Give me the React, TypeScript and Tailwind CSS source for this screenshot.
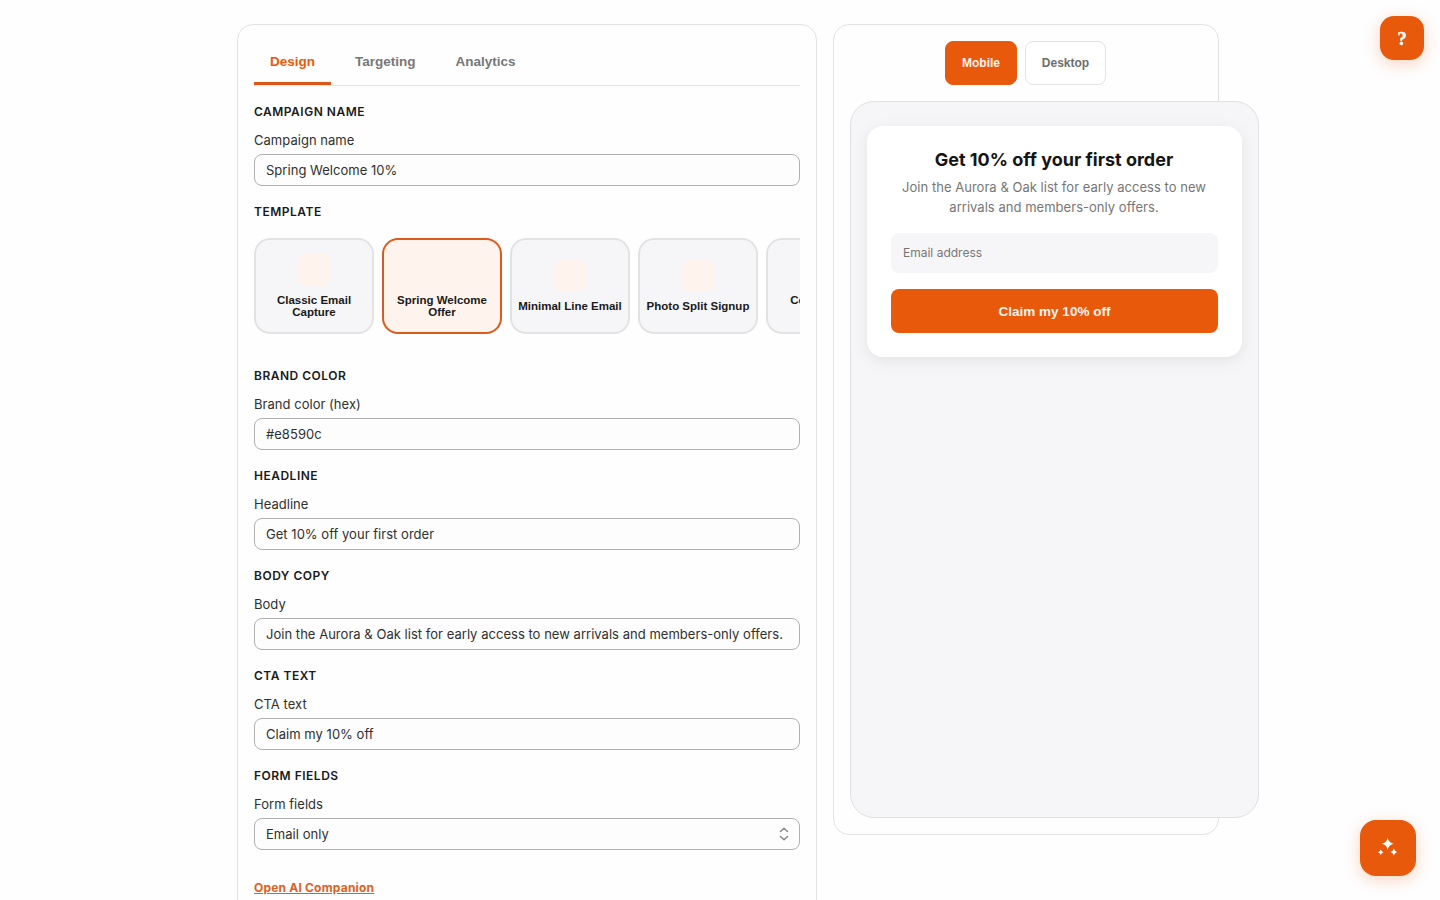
import { useState } from "react";

const tabs = ["Design", "Targeting", "Analytics"];

const templates = [
  "Classic Email Capture",
  "Spring Welcome Offer",
  "Minimal Line Email",
  "Photo Split Signup",
  "Corner Email Signup",
];

function Section({ title, children }: { title: string; children: React.ReactNode }) {
  return (
    <section className="flex flex-col gap-2">
      <h2 className="text-[12px] leading-5 font-semibold tracking-[0.5px] uppercase text-[#1a1a1a]">{title}</h2>
      {children}
    </section>
  );
}

function Field({ label, value, onChange }: { label: string; value: string; onChange: (v: string) => void }) {
  return (
    <label className="flex flex-col gap-1">
      <span className="text-[13px] leading-5 tracking-[0.03px] text-[#303030]">{label}</span>
      <input
        value={value}
        onChange={(e) => onChange(e.target.value)}
        className="h-8 w-full rounded-lg border border-[#b0b0b0] bg-[#fdfdfd] px-[11px] text-[13px] tracking-[0.03px] text-[#303030] outline-none"
      />
    </label>
  );
}

export default function App() {
  const [tab, setTab] = useState("Design");
  const [template, setTemplate] = useState("Spring Welcome Offer");
  const [device, setDevice] = useState("Mobile");
  const [name, setName] = useState("Spring Welcome 10%");
  const [color, setColor] = useState("#e8590c");
  const [headline, setHeadline] = useState("Get 10% off your first order");
  const [body, setBody] = useState("Join the Aurora & Oak list for early access to new arrivals and members-only offers.");
  const [cta, setCta] = useState("Claim my 10% off");

  return (
    <div className="h-screen overflow-hidden bg-[#fefefe] font-['Inter',sans-serif] text-[#303030]">
      <div className="flex items-start gap-4 pt-6 pl-[237px]">
        <div className="flex h-[920px] w-[580px] shrink-0 flex-col rounded-2xl border border-[#e3e3e3] bg-[#fefefe] p-4">
          <div className="flex gap-2 border-b border-[#e3e3e3]">
            {tabs.map((t) => (
              <button
                key={t}
                onClick={() => setTab(t)}
                className={`h-11 border-b-[3px] px-4 pt-0.5 font-['Liberation_Sans',sans-serif] text-[13.5px] font-bold ${
                  tab === t ? "border-[#d9581a] text-[#e8590c]" : "border-transparent text-[#777]"
                }`}
              >
                {t}
              </button>
            ))}
          </div>

          <div className="mt-4 flex flex-col gap-4">
            <Section title="Campaign name">
              <Field label="Campaign name" value={name} onChange={setName} />
            </Section>

            <Section title="Template">
              <div className="flex gap-2 overflow-hidden pt-2 pb-4">
                {templates.map((t) => (
                  <button
                    key={t}
                    onClick={() => setTemplate(t)}
                    className={`flex h-24 w-[120px] shrink-0 flex-col items-center justify-center gap-2 rounded-2xl border-2 px-1 ${
                      template === t ? "border-[#dc5a1c] bg-[#fff3ed]" : "border-[#e3e3e3] bg-[#f6f6f8]"
                    }`}
                  >
                    <span className="size-8 rounded-lg bg-[#fff3ed]" />
                    <span className="text-center font-['Liberation_Sans',sans-serif] text-[11.5px] leading-3 font-bold text-[#1a1a1a]">
                      {t}
                    </span>
                  </button>
                ))}
              </div>
            </Section>

            <Section title="Brand color">
              <Field label="Brand color (hex)" value={color} onChange={setColor} />
            </Section>
            <Section title="Headline">
              <Field label="Headline" value={headline} onChange={setHeadline} />
            </Section>
            <Section title="Body copy">
              <Field label="Body" value={body} onChange={setBody} />
            </Section>
            <Section title="CTA text">
              <Field label="CTA text" value={cta} onChange={setCta} />
            </Section>

            <Section title="Form fields">
              <div className="flex flex-col gap-1">
                <span className="text-[13px] leading-5 tracking-[0.03px]">Form fields</span>
                <button className="flex h-8 items-center justify-between rounded-lg border border-[#b0b0b0] bg-[#fdfdfd] pr-[10px] pl-[11px] text-[13px] tracking-[0.03px]">
                  <span className="pt-px">Email only</span>
                  <svg width="10" height="14" viewBox="0 0 10 14" fill="none">
                    <path d="M1.5 4.5L5 1.2l3.5 3.3M1.5 9.5L5 12.8l3.5-3.3" stroke="#8a8a8a" strokeWidth="1.5" strokeLinecap="round" strokeLinejoin="round" />
                  </svg>
                </button>
              </div>
            </Section>
          </div>

          <a href="#" className="mt-7 self-start text-[12px] leading-5 font-bold tracking-[0.2px] text-[#e0601f] underline">
            Open AI Companion
          </a>
        </div>

        <div className="flex h-[811px] w-[386px] shrink-0 flex-col rounded-2xl border border-[#e3e3e3] bg-[#fefefe] p-4">
          <div className="flex justify-center gap-2 pr-px">
            {["Mobile", "Desktop"].map((d) => (
              <button
                key={d}
                onClick={() => setDevice(d)}
                className={`h-11 rounded-lg border font-['Liberation_Sans',sans-serif] text-[12px] font-bold ${
                  d === "Mobile" ? "w-[72px]" : "w-[81px]"
                } ${device === d ? "border-[#e8590c] bg-[#e8590c] text-[#fff4ee]" : "border-[#e3e3e3] bg-white text-[#6d6d6d]"}`}
              >
                {d}
              </button>
            ))}
          </div>

          <div className="mt-4 h-[717px] w-[409px] rounded-3xl border border-[#e1e1e3] bg-[#f6f6f8] px-4 py-6">
            <div className="flex flex-col rounded-2xl bg-white p-6 shadow-[0_4px_16px_rgba(0,0,0,0.08)]">
              <h3 className="pr-px text-center text-[18px] leading-5 font-bold text-[#151515]">{headline}</h3>
              <p className="mt-[7px] pr-px text-center text-[13px] leading-5 tracking-[0.03px] text-[#767676]">{body}</p>
              <div className="mt-4 flex h-10 items-center rounded-lg bg-[#f6f6f8] px-3 text-[12px] text-[#767676]">
                Email address
              </div>
              <button className="mt-4 h-11 rounded-lg bg-[#e8590c] pt-0.5 font-['Liberation_Sans',sans-serif] text-[13.5px] font-bold text-[#fff4ee]">
                {cta}
              </button>
            </div>
          </div>
        </div>
      </div>

      <button
        aria-label="Help"
        className="fixed top-4 right-4 flex size-11 items-center justify-center rounded-[14px] bg-[#e8590c] pt-0.5 font-['Liberation_Serif',serif] text-[19px] font-bold text-white shadow-[0_4px_16px_rgba(232,89,12,0.25)] [-webkit-text-stroke:0.4px_white]"
      >
        ?
      </button>
      <button
        aria-label="AI Companion"
        className="fixed right-6 bottom-6 flex size-14 items-center justify-center rounded-2xl bg-[#e8590c] shadow-[0_4px_16px_rgba(232,89,12,0.25)]"
      >
        <svg width="24" height="24" viewBox="0 0 24 24" fill="#fff">
          <path d="M11.7 1.8q.9 5.1 6 6-5.1.9-6 6-.9-5.1-6-6 5.1-.9 6-6z" />
          <path d="M4.7 13.5q.6 2.2 2.8 2.8-2.2.6-2.8 2.8-.6-2.2-2.8-2.8 2.2-.6 2.8-2.8z" />
          <path d="M17.8 12.6q.7 2.7 3.4 3.4-2.7.7-3.4 3.4-.7-2.7-3.4-3.4 2.7-.7 3.4-3.4z" />
        </svg>
      </button>
    </div>
  );
}
